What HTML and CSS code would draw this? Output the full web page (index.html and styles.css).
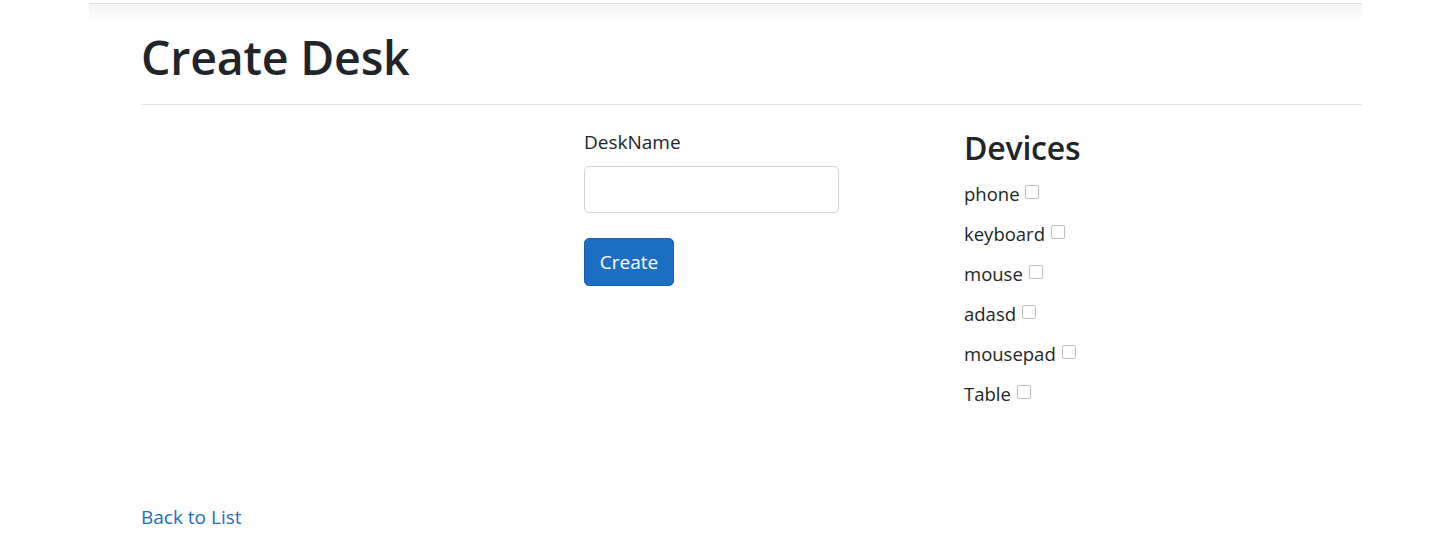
FILE: index.html
```html
<!DOCTYPE html>
<html lang="en">
<head>
<meta charset="utf-8">
<title>Create Desk</title>
<link rel="stylesheet" href="styles.css">
</head>
<body>
<div class="topbar"></div>
<main class="page">
  <h1 class="title">Create Desk</h1>
  <hr class="rule">
  <div class="content">
    <form class="desk-form">
      <label class="field-label" for="deskname">DeskName</label>
      <input class="field-input" id="deskname" type="text">
      <button class="btn-create" type="button">Create</button>
    </form>
    <section class="devices">
      <h3 class="devices-title">Devices</h3>
      <div class="device">phone <input class="check" type="checkbox"></div>
      <div class="device">keyboard <input class="check" type="checkbox"></div>
      <div class="device">mouse <input class="check" type="checkbox"></div>
      <div class="device">adasd <input class="check" type="checkbox"></div>
      <div class="device">mousepad <input class="check" type="checkbox"></div>
      <div class="device">Table <input class="check" type="checkbox"></div>
    </section>
  </div>
  <a class="back" href="#">Back to List</a>
</main>
</body>
</html>
```
FILE: styles.css
```css
html, body {
  margin: 0;
  padding: 0;
  background: #fff;
}
body {
  font-family: "Open Sans", "Noto Sans", sans-serif;
  color: #212529;
}
.topbar {
  margin: 3px 0 0 89px;
  width: 1273px;
  height: 18px;
  border-top: 1px solid #dcdcdc;
  background: linear-gradient(#f4f4f4, #ffffff);
}
.page {
  margin-left: 141px;
  width: 1221px;
}
.title {
  margin: 5px 0 0;
  font-size: 46.5px;
  line-height: 60px;
  font-weight: 600;
  letter-spacing: -0.2px;
}
.rule {
  margin: 17px 0 0;
  border: 0;
  border-top: 1px solid #e3e3e3;
  height: 0;
}
.content {
  display: grid;
  grid-template-columns: 443px 380px 1fr;
  padding-top: 22px;
  height: 375px;
}
.desk-form {
  grid-column: 2;
  display: flex;
  flex-direction: column;
  align-items: flex-start;
}
.field-label {
  font-size: 19px;
  line-height: 30px;
}
.field-input {
  margin-top: 9px;
  width: 255px;
  height: 47px;
  box-sizing: border-box;
  border: 1px solid #ced4da;
  border-radius: 5px;
  font: inherit;
  font-size: 19px;
  padding: 0 12px;
}
.btn-create {
  margin-top: 25px;
  width: 90px;
  height: 48px;
  border: 1px solid #1861ac;
  border-radius: 5px;
  background: #1b6ec2;
  color: #fff;
  font-family: inherit;
  font-size: 19px;
  padding: 0;
}
.devices {
  grid-column: 3;
}
.devices-title {
  margin: 0 0 5px;
  font-size: 32px;
  line-height: 42px;
  font-weight: 600;
  letter-spacing: -0.2px;
}
.device {
  font-size: 18.5px;
  line-height: 40px;
  height: 40px;
}
.check {
  appearance: none;
  -webkit-appearance: none;
  box-sizing: border-box;
  margin: 0 0 0 1px;
  width: 14px;
  height: 14px;
  border: 1px solid #bdbdbd;
  border-radius: 2px;
  background: #fff;
  vertical-align: 2px;
}
.back {
  display: inline-block;
  font-size: 19px;
  line-height: 30px;
  color: #1b6ec2;
  text-decoration: none;
}
```
